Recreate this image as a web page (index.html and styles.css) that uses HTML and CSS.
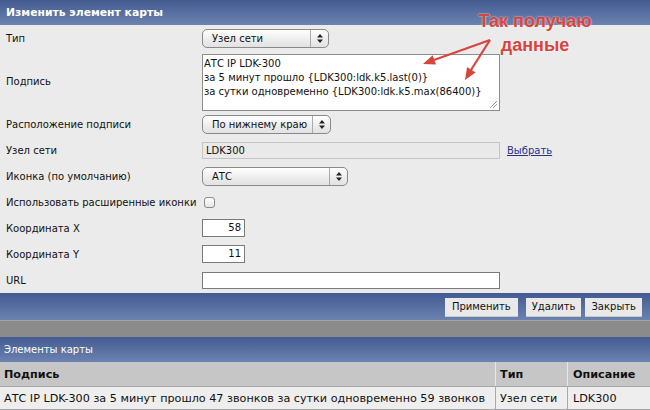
FILE: index.html
```html
<!DOCTYPE html>
<html lang="ru">
<head>
    <meta charset="UTF-8">
    <title>Изменить элемент карты</title>
    <link rel="stylesheet" href="styles.css">
</head>
<body>
    <div class="panel">
        <div class="bar title">Изменить элемент карты</div>

        <div class="form">
            <div class="row">
                <div class="label">Тип</div>
                <div class="field">
                    <div class="select w-type"><span>Узел сети</span><i class="arrows"><svg width="6" height="9" viewBox="0 0 6 9"><path d="M3 0L6 3.5H0Z M3 9L0 5.5H6Z" fill="#222"/></svg></i></div>
                </div>
            </div>
            <div class="row tall">
                <div class="label">Подпись</div>
                <div class="field">
                    <div class="textarea">АТС IP LDK-300<br>за 5 минут прошло {LDK300:ldk.k5.last(0)}<br>за сутки одновременно {LDK300:ldk.k5.max(86400)}<span class="grip"></span></div>
                </div>
            </div>
            <div class="row">
                <div class="label">Расположение подписи</div>
                <div class="field">
                    <div class="select w-pos"><span>По нижнему краю</span><i class="arrows"><svg width="6" height="9" viewBox="0 0 6 9"><path d="M3 0L6 3.5H0Z M3 9L0 5.5H6Z" fill="#222"/></svg></i></div>
                </div>
            </div>
            <div class="row">
                <div class="label">Узел сети</div>
                <div class="field">
                    <div class="input readonly wide">LDK300</div>
                    <a class="link" href="#">Выбрать</a>
                </div>
            </div>
            <div class="row">
                <div class="label">Иконка (по умолчанию)</div>
                <div class="field">
                    <div class="select w-icon"><span>АТС</span><i class="arrows"><svg width="6" height="9" viewBox="0 0 6 9"><path d="M3 0L6 3.5H0Z M3 9L0 5.5H6Z" fill="#222"/></svg></i></div>
                </div>
            </div>
            <div class="row">
                <div class="label">Использовать расширенные иконки</div>
                <div class="field"><span class="checkbox"></span></div>
            </div>
            <div class="row">
                <div class="label">Координата X</div>
                <div class="field"><div class="input num">58</div></div>
            </div>
            <div class="row">
                <div class="label">Координата Y</div>
                <div class="field"><div class="input num">11</div></div>
            </div>
            <div class="row">
                <div class="label">URL</div>
                <div class="field"><div class="input wide url"></div></div>
            </div>
        </div>

        <div class="bar buttons">
            <button class="btn">Применить</button>
            <button class="btn">Удалить</button>
            <button class="btn">Закрыть</button>
        </div>
        <div class="gap"></div>

        <div class="bar subtitle">Элементы карты</div>
        <table class="list">
            <tr>
                <th class="c-text">Подпись</th>
                <th class="c-type">Тип</th>
                <th class="c-desc">Описание</th>
            </tr>
            <tr>
                <td>АТС IP LDK-300 за 5 минут прошло 47 звонков за сутки одновременно 59 звонков</td>
                <td>Узел сети</td>
                <td>LDK300</td>
            </tr>
        </table>

        <div class="note">
            <div class="note-text">Так получаю<br>данные</div>
            <svg class="note-arrows" width="120" height="80" viewBox="0 0 120 80">
                <path d="M70 31L14 51" stroke="#d8453d" stroke-width="2.2" fill="none"/>
                <path d="M3 55L16 55.6L12.6 46.2Z" fill="#d8453d"/>
                <path d="M70 31L51 61" stroke="#d8453d" stroke-width="2.2" fill="none"/>
                <path d="M45 71L55.6 63.4L47.1 58.1Z" fill="#d8453d"/>
            </svg>
        </div>
    </div>
</body>
</html>
```

FILE: styles.css
```css
body {
    margin: 0;
    font-family: "DejaVu Sans", Verdana, sans-serif;
    font-size: 10px;
    color: #111;
    background-color: #ebebeb;
}

.panel {
    position: relative;
    width: 650px;
    height: 410px;
    overflow: hidden;
}

.bar {
    background: linear-gradient(#435b91, #6c82b0);
    color: #fff;
}

.title {
    height: 25px;
    line-height: 25px;
    padding-left: 6px;
    font-weight: bold;
    font-size: 10.8px;
}

.row {
    display: flex;
    align-items: center;
    height: 26px;
}
.row.tall { height: 60px; }

.label {
    width: 196px;
    padding-left: 6px;
    flex-shrink: 0;
}

.field {
    display: flex;
    align-items: center;
}

.select {
    display: flex;
    align-items: center;
    justify-content: space-between;
    box-sizing: border-box;
    height: 19px;
    border: 1px solid #8a8a8a;
    border-radius: 5px;
    background: linear-gradient(#ffffff, #ececec 60%, #e2e2e2);
    padding-left: 9px;
}
.w-type { width: 127px; }
.w-pos { width: 129px; }
.w-icon { width: 146px; }

.arrows {
    width: 17px;
    height: 100%;
    border-left: 1px solid #aaa;
    display: flex;
    align-items: center;
    justify-content: center;
}

.textarea {
    position: relative;
    width: 298px;
    height: 57px;
    box-sizing: border-box;
    background: #fff;
    border: 1px solid #8c8c8c;
    padding: 2px 1px;
    line-height: 14px;
    margin-top: 2px;
}
.grip {
    position: absolute;
    right: 2px;
    bottom: 2px;
    width: 7px;
    height: 7px;
    background: linear-gradient(135deg, transparent 45%, #999 45%, #999 52%, transparent 52%, transparent 70%, #999 70%, #999 77%, transparent 77%);
}

.input {
    box-sizing: border-box;
    background: #fff;
    border: 1px solid #7a7a7a;
    height: 18px;
    line-height: 16px;
    padding: 0 3px;
}
.wide { width: 298px; }
.url { height: 17px; }
.num {
    width: 43px;
    text-align: right;
}
.readonly {
    background: #e9e9e9;
    border-color: #c4c4c4;
    height: 17px;
}

.link {
    margin-left: 7px;
    color: #27338a;
}

.checkbox {
    display: block;
    width: 9px;
    height: 9px;
    margin-left: 2px;
    border: 1px solid #8a8a8a;
    border-radius: 3px;
    background: linear-gradient(#fff, #e6e6e6);
}

.buttons {
    height: 27px;
    display: flex;
    justify-content: flex-end;
    align-items: center;
    gap: 4px;
    padding-right: 8px;
}
.btn {
    font-family: "DejaVu Sans", Verdana, sans-serif;
    font-size: 10px;
    color: #111;
    background: #e9e9e9;
    border: none;
    border-bottom: 1px solid #c8c8c8;
    height: 19px;
    padding: 0 6px;
    margin-top: 1px;
}
.btn:first-child {
    margin-right: 4px;
    padding: 0 7px;
}

.gap {
    height: 16px;
    background: #8b8b8b;
    border-top: 1px solid #a5a5a5;
}

.subtitle {
    height: 25px;
    line-height: 25px;
    padding-left: 4px;
}

.list {
    width: 650px;
    table-layout: fixed;
    border-collapse: collapse;
    font-size: 11.2px;
}
.list th {
    background: #c6c6c6;
    text-align: left;
    height: 24px;
    padding: 0 4px;
    border-right: 1px solid #e8e8e8;
    border-bottom: 1px solid #a8a8a8;
}
.list td {
    background: #eeeeee;
    height: 22px;
    padding: 0 4px;
    white-space: nowrap;
    overflow: hidden;
    border-right: 1px solid #a8a8a8;
    border-bottom: 1px solid #a8a8a8;
}
.list th:last-child, .list td:last-child {
    padding-left: 5px;
    border-right: none;
}
.c-text { width: 487px; }
.c-type { width: 63px; }

.note {
    position: absolute;
    left: 420px;
    top: 9px;
    width: 230px;
    height: 80px;
}
.note-text {
    position: absolute;
    left: 55px;
    top: 0;
    width: 120px;
    text-align: center;
    font-family: "Liberation Sans", Arial, sans-serif;
    font-weight: bold;
    font-size: 18px;
    line-height: 24px;
    color: #d8453d;
    text-shadow: 0 0 2px rgba(255, 255, 255, 0.9);
}
.note-arrows {
    position: absolute;
    left: 0;
    top: 0;
}
```
